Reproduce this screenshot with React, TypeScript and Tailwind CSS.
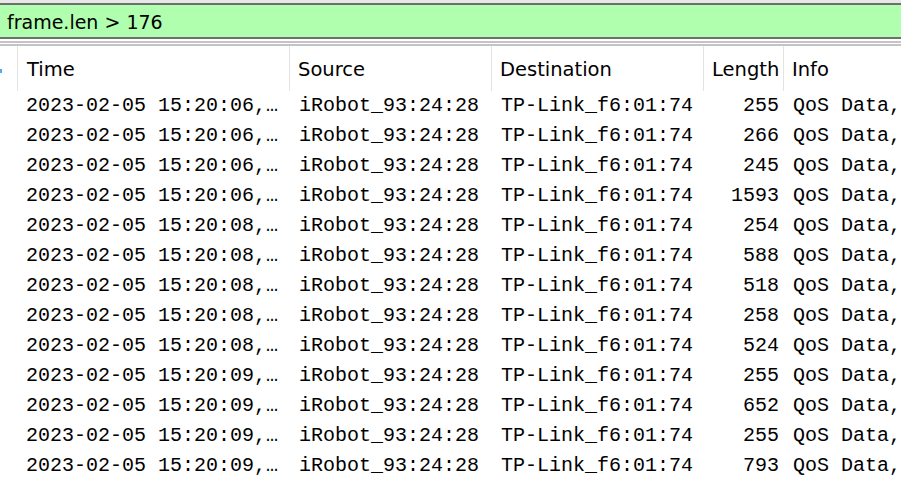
const ROWS: [string, string][] = [
  ['2023-02-05 15:20:06,…', '255'],
  ['2023-02-05 15:20:06,…', '266'],
  ['2023-02-05 15:20:06,…', '245'],
  ['2023-02-05 15:20:06,…', '1593'],
  ['2023-02-05 15:20:08,…', '254'],
  ['2023-02-05 15:20:08,…', '588'],
  ['2023-02-05 15:20:08,…', '518'],
  ['2023-02-05 15:20:08,…', '258'],
  ['2023-02-05 15:20:08,…', '524'],
  ['2023-02-05 15:20:09,…', '255'],
  ['2023-02-05 15:20:09,…', '652'],
  ['2023-02-05 15:20:09,…', '255'],
  ['2023-02-05 15:20:09,…', '793'],
];

const ui = { fontFamily: '"DejaVu Sans", "Liberation Sans", sans-serif' };
const mono = { fontFamily: '"Liberation Mono", monospace' };

function HeaderCell({ label, className }: { label: string; className: string }) {
  return (
    <div className={`h-full flex items-center pt-[3px] border-r border-[#e3e3e3] text-[19.5px] text-black ${className}`} style={ui}>
      {label}
    </div>
  );
}

export default function App() {
  return (
    <div className="w-[901px] h-[478px] overflow-hidden bg-white">
      {/* Display filter bar */}
      <div className="pt-[3px] bg-[#e8e8e8]">
        <div className="h-[36px] border-y-2 border-[#6f6f6f] bg-[#afffaf] flex items-center pl-[7px] pt-[2px]">
          <span className="text-[19px] text-black leading-none" style={ui}>
            frame.len &gt; 176
          </span>
        </div>
      </div>
      <div className="h-[2px] bg-white" />
      <div className="h-[2px] bg-[#c4c4c4]" />
      <div className="h-px bg-white" />
      <div className="h-[2px] bg-[#c4c4c4]" />

      {/* Column headers */}
      <div className="h-[45px] flex">
        <div className="w-[18px] h-full flex items-center border-r border-[#e3e3e3]">
          <div className="w-[2px] h-[4px] bg-[#5aa9e6] mt-[4px]" />
        </div>
        <HeaderCell label="Time" className="w-[272px] pl-[9px]" />
        <HeaderCell label="Source" className="w-[202px] pl-[8px]" />
        <HeaderCell label="Destination" className="w-[212px] pl-[8px]" />
        <HeaderCell label="Length" className="w-[80px] pl-[8px]" />
        <div className="flex-1 h-full flex items-center pt-[3px] pl-[8px] text-[19.5px] text-black" style={ui}>
          Info
        </div>
      </div>

      {/* Packet rows */}
      <div className="flex flex-col">
        {ROWS.map(([time, len], i) => (
          <div key={i} className="h-[30px] flex items-center text-[20px] text-black whitespace-nowrap" style={mono}>
            <div className="w-[26px] shrink-0" />
            <div className="w-[273px] shrink-0">{time}</div>
            <div className="w-[202px] shrink-0">iRobot_93:24:28</div>
            <div className="w-[212px] shrink-0">TP-Link_f6:01:74</div>
            <div className="w-[66px] shrink-0 text-right">{len}</div>
            <div className="pl-[14px] shrink-0">QoS Data,</div>
          </div>
        ))}
      </div>
    </div>
  );
}
